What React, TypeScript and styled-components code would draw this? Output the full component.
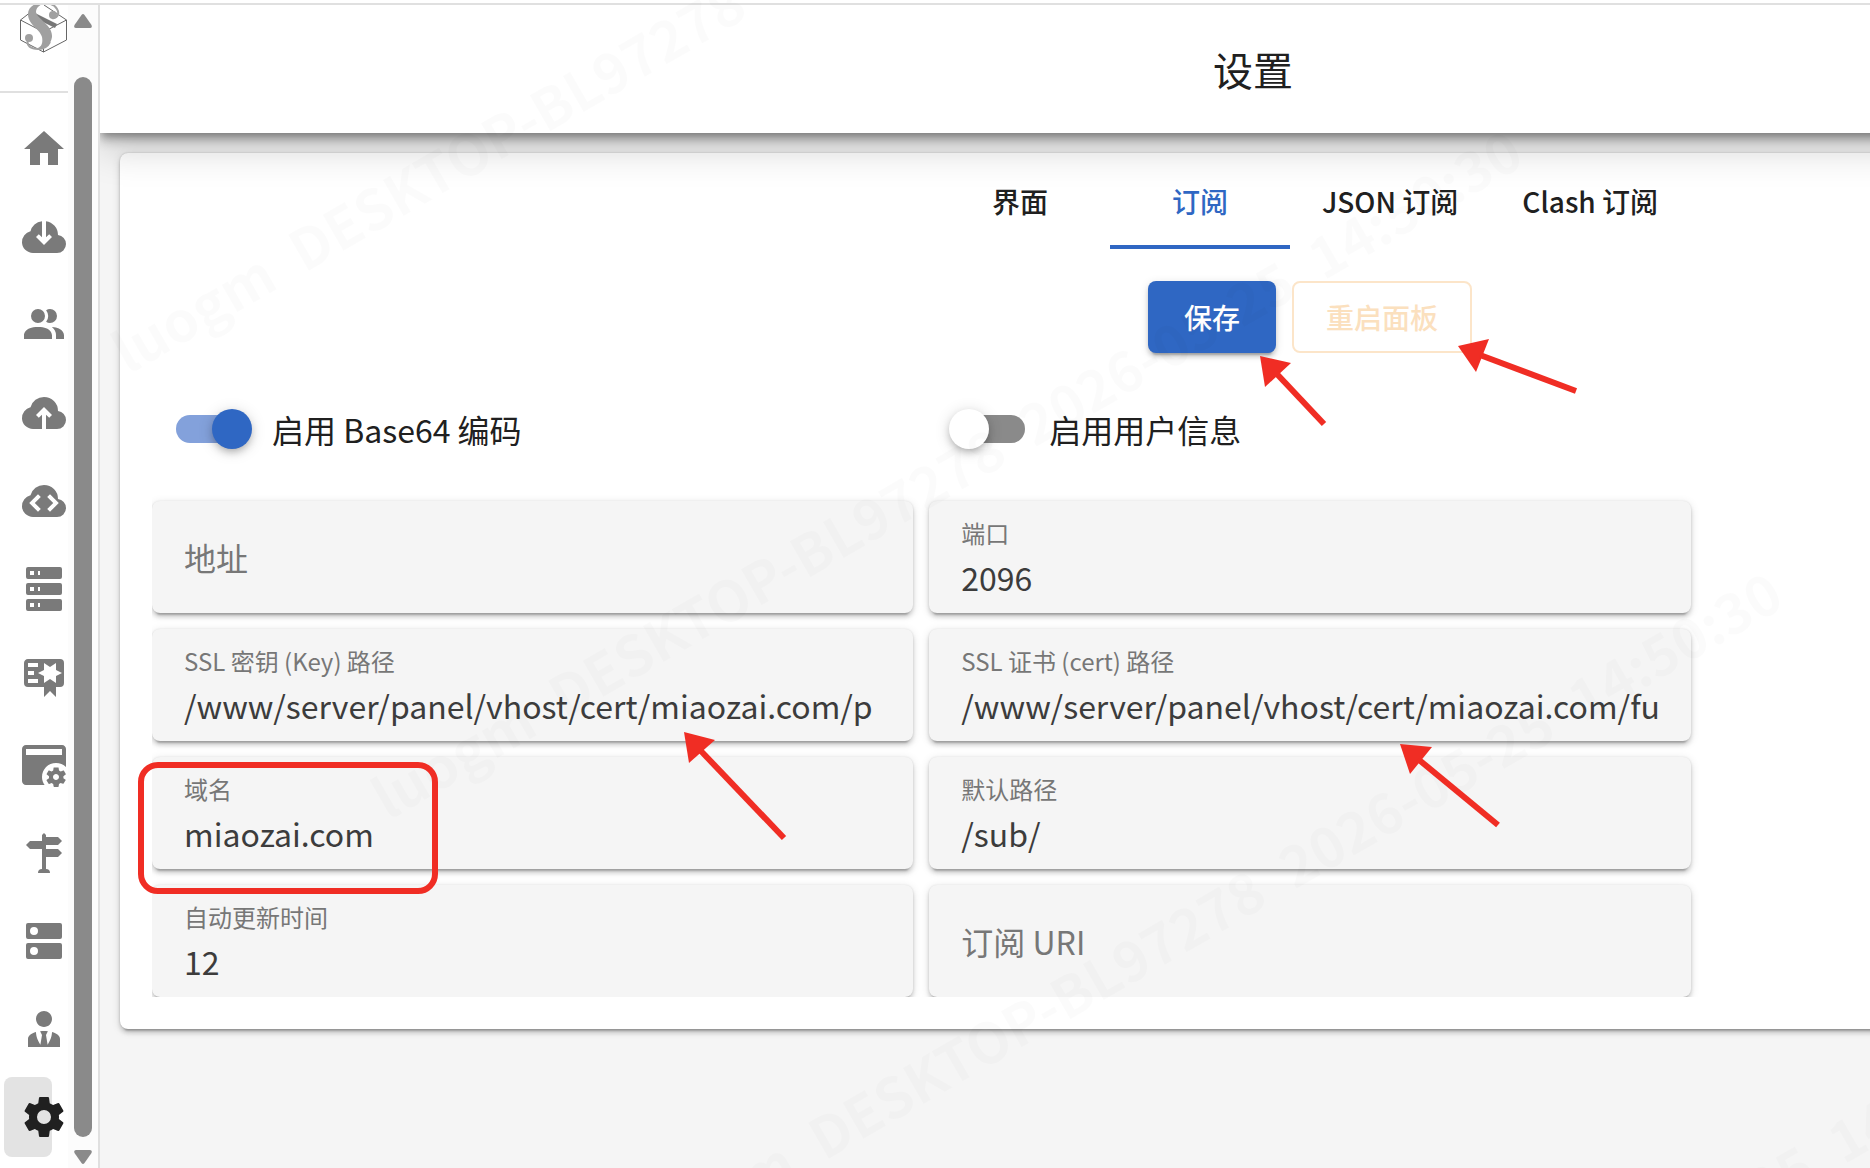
import React, { useId, useState } from "react";
import styled, { createGlobalStyle } from "styled-components";

const palette = {
  primary: "#2f67c3",
  text: "#202020",
  muted: "#777777",
  line: "#e0e0e0",
  surface: "#ffffff",
  page: "#f5f5f5",
  mark: "#f02d24",
};

const GlobalStyle = createGlobalStyle`
  * { box-sizing: border-box; }
  body {
    margin: 0;
    overflow: hidden;
    background: ${palette.page};
    color: ${palette.text};
    font-family: "Noto Sans CJK SC", "Noto Sans", sans-serif;
  }
  button, input { font-family: inherit; }
`;

const Page = styled.div`
  position: relative;
  display: flex;
  flex-direction: column;
  height: 100vh;
  overflow: hidden;
`;

const TopStrip = styled.div`
  flex: none;
  height: 5px;
  background: ${palette.surface};
  border-bottom: 2px solid ${palette.line};
`;

const Shell = styled.div`
  flex: 1;
  min-height: 0;
  display: flex;
`;

/* ---------- sidebar ---------- */

const Sidebar = styled.aside`
  position: relative;
  z-index: 2;
  flex: none;
  display: flex;
  width: 100px;
  background: ${palette.surface};
  border-right: 2px solid ${palette.line};
`;

const NavColumn = styled.div`
  width: 68px;
`;

const LogoBox = styled.div`
  display: flex;
  justify-content: flex-end;
  height: 88px;
  border-bottom: 2px solid ${palette.line};
`;

const NavList = styled.nav`
  display: flex;
  flex-direction: column;
  gap: 8px;
  padding: 16px 0 0 4px;
`;

const NavLink = styled.a<{ $active: boolean }>`
  display: flex;
  align-items: center;
  width: 48px;
  height: 80px;
  padding-left: 16px;
  border-radius: 8px;
  color: ${(p) => (p.$active ? palette.text : "#7a7a7a")};
  background: ${(p) => (p.$active ? "#e3e3e3" : "transparent")};

  svg {
    flex: none;
    width: 48px;
    height: 48px;
    fill: currentColor;
  }
`;

const ScrollTrack = styled.div`
  flex: 1;
  display: flex;
  flex-direction: column;
  align-items: center;
  padding: 9px 0 4px;
  background: #fcfcfc;

  svg {
    flex: none;
    width: 18px;
    height: 14px;
    fill: #8a8a8a;
  }
`;

const ScrollThumb = styled.div`
  flex: 1;
  width: 18px;
  margin: 49px 0 13px;
  border-radius: 9px;
  background: #8a8a8a;
`;

/* ---------- main area ---------- */

const Viewport = styled.div`
  flex: 1;
  min-width: 0;
  overflow: hidden;
`;

const Workspace = styled.div`
  display: flex;
  flex-direction: column;
  width: calc(100% + 650px);
`;

const AppBar = styled.header`
  position: relative;
  z-index: 1;
  display: flex;
  align-items: center;
  justify-content: center;
  height: 128px;
  padding-right: 114px;
  background: ${palette.surface};
  box-shadow:
    0 4px 8px -2px rgba(0, 0, 0, 0.3),
    0 8px 10px 0 rgba(0, 0, 0, 0.2),
    0 16px 36px 0 rgba(0, 0, 0, 0.18);
`;

const Title = styled.h1`
  margin: 0;
  font-size: 40px;
  font-weight: 400;
  line-height: 64px;
`;

const Content = styled.main`
  padding: 20px;
`;

const Card = styled.section`
  padding-bottom: 32px;
  border-radius: 8px;
  background: ${palette.surface};
  box-shadow:
    0 6px 2px -4px rgba(0, 0, 0, 0.2),
    0 4px 4px 0 rgba(0, 0, 0, 0.14),
    0 2px 10px 0 rgba(0, 0, 0, 0.12),
    0 0 2px 0 rgba(0, 0, 0, 0.2);
`;

const Tabs = styled.div`
  display: flex;
  justify-content: center;
  height: 96px;
`;

const Tab = styled.button<{ $active: boolean }>`
  min-width: 180px;
  padding: 4px 32px 0;
  border: 0;
  border-bottom: 4px solid ${(p) => (p.$active ? palette.primary : "transparent")};
  background: none;
  color: ${(p) => (p.$active ? palette.primary : palette.text)};
  font-size: 28px;
  font-weight: 500;
  line-height: 40px;
`;

const Actions = styled.div`
  display: flex;
  justify-content: center;
  gap: 16px;
  padding: 32px 0 20px;
`;

const ActionButton = styled.button<{ $outlined?: boolean }>`
  height: 72px;
  padding: 0 ${(p) => (p.$outlined ? 32 : 36)}px;
  border: ${(p) => (p.$outlined ? "2px solid #fce5c9" : "0")};
  border-radius: 8px;
  background: ${(p) => (p.$outlined ? "transparent" : palette.primary)};
  color: ${(p) => (p.$outlined ? "#fbe0be" : palette.surface)};
  font-size: 28px;
  font-weight: 500;
  line-height: 40px;
  box-shadow: ${(p) =>
    p.$outlined
      ? "none"
      : "0 6px 2px -4px rgba(0,0,0,.2), 0 4px 4px 0 rgba(0,0,0,.14), 0 2px 10px 0 rgba(0,0,0,.12)"};
`;

const FormGrid = styled.div`
  display: grid;
  grid-template-columns: repeat(3, minmax(0, 1fr));
  gap: 16px;
  margin: 0 32px;
  overflow: hidden;
`;

const SwitchRow = styled.div<{ $last?: boolean }>`
  display: flex;
  align-items: center;
  gap: 24px;
  grid-column: ${(p) => (p.$last ? "2 / 4" : "auto")};
  height: 112px;
  padding-left: 24px;

  label {
    font-size: 32px;
    line-height: 48px;
  }
`;

const SwitchInput = styled.input`
  appearance: none;
  flex: none;
  position: relative;
  width: 72px;
  height: 28px;
  margin: 0;
  border-radius: 14px;
  background: #8a8a8a;

  &::before {
    content: "";
    position: absolute;
    top: -6px;
    left: -4px;
    width: 40px;
    height: 40px;
    border-radius: 50%;
    background: ${palette.surface};
    box-shadow: 0 4px 8px -2px rgba(0, 0, 0, 0.3), 0 2px 16px 0 rgba(0, 0, 0, 0.14);
  }

  &:checked {
    background: #83a1db;
  }

  &:checked::before {
    left: 36px;
    background: ${palette.primary};
  }
`;

const FieldBox = styled.div<{ $start?: boolean; $empty: boolean }>`
  display: grid;
  grid-template-rows: ${(p) => (p.$empty ? "1fr" : "32px 52px")};
  grid-template-columns: minmax(0, 1fr);
  align-items: ${(p) => (p.$empty ? "center" : "end")};
  grid-column: ${(p) => (p.$start ? "1" : "2")};
  height: 112px;
  padding: ${(p) => (p.$empty ? "0 32px" : "16px 32px 0")};
  border-radius: 8px;
  background: ${palette.page};
  box-shadow:
    0 6px 2px -4px rgba(0, 0, 0, 0.2),
    0 4px 4px 0 rgba(0, 0, 0, 0.14),
    0 2px 10px 0 rgba(0, 0, 0, 0.12),
    0 0 2px 0 rgba(0, 0, 0, 0.1);

  label {
    grid-area: 1 / 1;
    color: ${palette.muted};
    font-size: ${(p) => (p.$empty ? 32 : 24)}px;
    line-height: ${(p) => (p.$empty ? 48 : 32)}px;
  }

  input {
    grid-area: ${(p) => (p.$empty ? "1 / 1" : "2 / 1")};
    width: 100%;
    height: 48px;
    padding: 0;
    border: 0;
    outline: 0;
    background: none;
    color: #3c3c3c;
    font-size: 32px;
    line-height: 48px;
  }
`;

/* ---------- overlays ---------- */

const Overlay = styled.div`
  position: absolute;
  inset: 0;
  z-index: 3;
  overflow: hidden;
  pointer-events: none;
`;

const Stamp = styled.span<{ $x: number; $y: number }>`
  position: absolute;
  left: ${(p) => p.$x}px;
  top: ${(p) => p.$y}px;
  display: flex;
  gap: 28px;
  color: rgba(0, 0, 0, 0.016);
  font-size: 56px;
  font-weight: 700;
  line-height: 64px;
  white-space: nowrap;
  transform: rotate(-30deg);
  transform-origin: left bottom;
`;

const MarkBox = styled.div`
  position: absolute;
  left: 138px;
  top: 762px;
  width: 300px;
  height: 132px;
  border: 6px solid ${palette.mark};
  border-radius: 20px;
`;

const Arrows = styled.svg`
  position: absolute;
  left: 0;
  top: 0;
  width: 1870px;
  height: 1168px;
  fill: ${palette.mark};
  stroke: ${palette.mark};
`;

/* ---------- data ---------- */

const navItems = [
  { name: "home", d: "M10,20V14H14V20H19V12H22L12,3L2,12H5V20H10Z" },
  {
    name: "inbounds",
    d: "M6.5 20Q4.22 20 2.61 18.43 1 16.85 1 14.58 1 12.63 2.17 11.1 3.35 9.57 5.25 9.15 5.68 7.13 7.25 5.73 8.83 4.33 11 4.07V12.15L9.4 10.6L8 12L12 16L16 12L14.6 10.6L13 12.15V4.07Q15.58 4.43 17.29 6.39 19 8.35 19 11 20.73 11.2 21.86 12.5 23 13.78 23 15.5 23 17.38 21.69 18.69 20.38 20 18.5 20Z",
  },
  {
    name: "clients",
    d: "M16 17V19H2V17S2 13 9 13 16 17 16 17M12.5 7.5A3.5 3.5 0 1 0 9 11A3.5 3.5 0 0 0 12.5 7.5M15.94 13A5.32 5.32 0 0 1 18 17V19H22V17S22 13.37 15.94 13M15 4A3.39 3.39 0 0 0 13.07 4.59A5 5 0 0 1 13.07 10.41A3.39 3.39 0 0 0 15 11A3.5 3.5 0 0 0 15 4Z",
  },
  {
    name: "outbounds",
    d: "M11 20H6.5Q4.22 20 2.61 18.43 1 16.85 1 14.58 1 12.63 2.17 11.1 3.35 9.57 5.25 9.15 5.88 6.85 7.75 5.43 9.63 4 12 4 14.93 4 16.96 6.04 19 8.07 19 11 20.73 11.2 21.86 12.5 23 13.78 23 15.5 23 17.38 21.69 18.69 20.38 20 18.5 20H13V12.85L14.6 14.4L16 13L12 9L8 13L9.4 14.4L11 12.85Z",
  },
  {
    name: "endpoints",
    d: "M6.5 20Q4.22 20 2.61 18.43 1 16.85 1 14.58 1 12.63 2.17 11.1 3.35 9.57 5.25 9.15 5.88 6.85 7.75 5.43 9.63 4 12 4 14.93 4 16.96 6.04 19 8.07 19 11 20.73 11.2 21.86 12.5 23 13.78 23 15.5 23 17.38 21.69 18.69 20.38 20 18.5 20ZM9 17.4L10.4 16L7.4 13L10.4 10L9 8.6L4.6 13ZM15 17.4L19.4 13L15 8.6L13.6 10L16.6 13L13.6 16Z",
  },
  {
    name: "services",
    d: "M4,1H20A1,1 0 0,1 21,2V6A1,1 0 0,1 20,7H4A1,1 0 0,1 3,6V2A1,1 0 0,1 4,1M4,9H20A1,1 0 0,1 21,10V14A1,1 0 0,1 20,15H4A1,1 0 0,1 3,14V10A1,1 0 0,1 4,9M4,17H20A1,1 0 0,1 21,18V22A1,1 0 0,1 20,23H4A1,1 0 0,1 3,22V18A1,1 0 0,1 4,17M9,5H10V3H9V5M9,13H10V11H9V13M9,21H10V19H9V21M5,3V5H7V3H5M5,11V13H7V11H5M5,19V21H7V19H5Z",
  },
  {
    name: "tls",
    d: "M4,3C2.89,3 2,3.89 2,5V15A2,2 0 0,0 4,17H12V22L15,19L18,22V17H20A2,2 0 0,0 22,15V5A2,2 0 0,0 20,3H4M12,5L15,7L18,5V8.5L21,10L18,11.5V15L15,13L12,15V11.5L9,10L12,8.5V5M4,5H9V7H4V5M4,9H7V11H4V9M4,13H9V15H4V13Z",
  },
  {
    name: "basics",
    d: "M21.7 18.6V17.6L22.8 16.8C22.9 16.7 23 16.6 22.9 16.5L21.9 14.8C21.9 14.7 21.7 14.7 21.6 14.7L20.4 15.2C20.1 15 19.8 14.8 19.5 14.7L19.3 13.4C19.3 13.3 19.2 13.2 19.1 13.2H17.1C16.9 13.2 16.8 13.3 16.8 13.4L16.6 14.7C16.3 14.9 16.1 15 15.8 15.2L14.6 14.7C14.5 14.7 14.4 14.7 14.3 14.8L13.3 16.5C13.3 16.6 13.3 16.7 13.4 16.8L14.5 17.6V18.6L13.4 19.4C13.3 19.5 13.2 19.6 13.3 19.7L14.3 21.4C14.4 21.5 14.5 21.5 14.6 21.5L15.8 21C16 21.2 16.3 21.4 16.6 21.5L16.8 22.8C16.9 22.9 17 23 17.1 23H19.1C19.2 23 19.3 22.9 19.3 22.8L19.5 21.5C19.8 21.3 20 21.2 20.3 21L21.5 21.4C21.6 21.4 21.7 21.4 21.8 21.3L22.8 19.6C22.9 19.5 22.9 19.4 22.8 19.4L21.7 18.6M18 19.5C17.2 19.5 16.5 18.8 16.5 18S17.2 16.5 18 16.5 19.5 17.2 19.5 18 18.8 19.5 18 19.5M11 18C11 14.1 14.1 11 18 11C19.9 11 21.7 11.8 23 13V4C23 2.9 22.1 2 21 2H3C1.9 2 1 2.9 1 4V20C1 21.1 1.9 22 3 22H12.3C11.5 20.8 11 19.5 11 18M3 7V4H21V7H3Z",
  },
  {
    name: "rules",
    d: "M11,10H5L3,8L5,6H11V3L12,2L13,3V4H19L21,6L19,8H13V10H19L21,12L19,14H13V20A2,2 0 0,1 15,22H9A2,2 0 0,1 11,20V10Z",
  },
  {
    name: "dns",
    d: "M7,9A2,2 0 0,1 5,7A2,2 0 0,1 7,5A2,2 0 0,1 9,7A2,2 0 0,1 7,9M20,3H4A1,1 0 0,0 3,4V10A1,1 0 0,0 4,11H20A1,1 0 0,0 21,10V4A1,1 0 0,0 20,3M7,19A2,2 0 0,1 5,17A2,2 0 0,1 7,15A2,2 0 0,1 9,17A2,2 0 0,1 7,19M20,13H4A1,1 0 0,0 3,14V20A1,1 0 0,0 4,21H20A1,1 0 0,0 21,20V14A1,1 0 0,0 20,13Z",
  },
  {
    name: "admins",
    d: "M12 3C14.21 3 16 4.79 16 7S14.21 11 12 11 8 9.21 8 7 9.79 3 12 3M16 13.54C16 14.6 15.72 17.07 13.81 19.83L13 15L13.94 13.12C13.32 13.05 12.67 13 12 13S10.68 13.05 10.06 13.12L11 15L10.19 19.83C8.28 17.07 8 14.6 8 13.54C5.61 14.24 4 15.5 4 17V21H20V17C20 15.5 18.4 14.24 16 13.54Z",
  },
  {
    name: "settings",
    d: "M12,15.5A3.5,3.5 0 0,1 8.5,12A3.5,3.5 0 0,1 12,8.5A3.5,3.5 0 0,1 15.5,12A3.5,3.5 0 0,1 12,15.5M19.43,12.97C19.47,12.65 19.5,12.33 19.5,12C19.5,11.67 19.47,11.34 19.43,11L21.54,9.37C21.73,9.22 21.78,8.95 21.66,8.73L19.66,5.27C19.54,5.05 19.27,4.96 19.05,5.05L16.56,6.05C16.04,5.66 15.5,5.32 14.87,5.07L14.5,2.42C14.46,2.18 14.25,2 14,2H10C9.75,2 9.54,2.18 9.5,2.42L9.13,5.07C8.5,5.32 7.96,5.66 7.44,6.05L4.95,5.05C4.73,4.96 4.46,5.05 4.34,5.27L2.34,8.73C2.21,8.95 2.27,9.22 2.46,9.37L4.57,11C4.53,11.34 4.5,11.67 4.5,12C4.5,12.33 4.53,12.65 4.57,12.97L2.46,14.63C2.27,14.78 2.21,15.05 2.34,15.27L4.34,18.73C4.46,18.95 4.73,19.03 4.95,18.95L7.44,17.94C7.96,18.34 8.5,18.68 9.13,18.93L9.5,21.58C9.54,21.82 9.75,22 10,22H14C14.25,22 14.46,21.82 14.5,21.58L14.87,18.93C15.5,18.67 16.04,18.34 16.56,17.94L19.05,18.95C19.27,19.03 19.54,18.95 19.66,18.73L21.66,15.27C21.78,15.05 21.73,14.78 21.54,14.63L19.43,12.97Z",
  },
];

const tabs = ["界面", "订阅", "JSON 订阅", "Clash 订阅"];

const fields = [
  { label: "地址", value: "" },
  { label: "端口", value: "2096" },
  { label: "SSL 密钥 (Key) 路径", value: "/www/server/panel/vhost/cert/miaozai.com/p" },
  { label: "SSL 证书 (cert) 路径", value: "/www/server/panel/vhost/cert/miaozai.com/fu" },
  { label: "域名", value: "miaozai.com" },
  { label: "默认路径", value: "/sub/" },
  { label: "自动更新时间", value: "12" },
  { label: "订阅 URI", value: "" },
];

const stamps = [
  { x: 132, y: 318 },
  { x: 392, y: 764 },
  { x: 652, y: 1206 },
  { x: 912, y: 1648 },
  { x: -1145, y: 1648 },
];

/* ---------- parts ---------- */

function Logo() {
  return (
    <svg width="50" height="50" viewBox="18 5 50 50" aria-label="S-UI" role="img">
      <path
        d="M36 8L20.500 20V40L43.500 52L66.500 40V20L44 5M20.500 20L43.500 32L66.500 20M43.500 32V52"
        fill="none"
        stroke="#666666"
        strokeWidth="1"
      />
      <path d="M33 12L57 24L55 28L35 18Z" fill="#777777" />
      <path
        d="M52 18C57 19 60 14 57 9C54 4 49 3 44 4M28 40C26 46 31 49 38 49C44 49 48 46 50 42"
        fill="none"
        stroke="#a0a0a0"
        strokeWidth="2"
      />
      <path
        d="M28 14C28 7 35 2 45 3C39 5 36 8 36 12C37 19 53 25 52 37C51 45 44 50 36 49C42 47 43 43 42 37C40 29 28 25 28 14Z"
        fill="#a0a0a0"
      />
      <circle cx="29" cy="38" r="4" fill="#a0a0a0" />
      <circle cx="53" cy="15" r="4" fill="#a0a0a0" />
    </svg>
  );
}

function Field({ label, value, start }: { label: string; value: string; start: boolean }) {
  const id = useId();
  const [current, setCurrent] = useState(value);
  return (
    <FieldBox $start={start} $empty={current === ""}>
      <label htmlFor={id}>{label}</label>
      <input id={id} type="text" value={current} onChange={(e) => setCurrent(e.target.value)} />
    </FieldBox>
  );
}

function Switch({ label, on, last }: { label: string; on: boolean; last?: boolean }) {
  const id = useId();
  return (
    <SwitchRow $last={last}>
      <SwitchInput id={id} type="checkbox" role="switch" defaultChecked={on} />
      <label htmlFor={id}>{label}</label>
    </SwitchRow>
  );
}

function Arrow({ head, from, to }: { head: string; from: [number, number]; to: [number, number] }) {
  return (
    <g>
      <polygon points={head} stroke="none" />
      <line x1={from[0]} y1={from[1]} x2={to[0]} y2={to[1]} strokeWidth="6" />
    </g>
  );
}

export default function App() {
  const [tab, setTab] = useState(1);

  return (
    <Page>
      <GlobalStyle />
      <TopStrip />
      <Shell>
        <Sidebar>
          <NavColumn>
            <LogoBox>
              <Logo />
            </LogoBox>
            <NavList>
              {navItems.map((item) => (
                <NavLink
                  key={item.name}
                  href={`#${item.name}`}
                  aria-label={item.name}
                  $active={item.name === "settings"}
                >
                  <svg viewBox="0 0 24 24" fillRule="evenodd">
                    <path d={item.d} />
                  </svg>
                </NavLink>
              ))}
            </NavList>
          </NavColumn>
          <ScrollTrack>
            <svg viewBox="0 0 18 14">
              <path d="M7.5 1Q9 -1 10.500 1L17.500 11Q18.500 14 16 14H2Q-.5 14 .5 11Z" />
            </svg>
            <ScrollThumb />
            <svg viewBox="0 0 18 14">
              <path d="M7.5 13Q9 15 10.500 13L17.500 3Q18.500 0 16 0H2Q-.5 0 .5 3Z" />
            </svg>
          </ScrollTrack>
        </Sidebar>

        <Viewport>
          <Workspace>
            <AppBar>
              <Title>设置</Title>
            </AppBar>
            <Content>
              <Card>
                <Tabs role="tablist">
                  {tabs.map((name, i) => (
                    <Tab
                      key={name}
                      type="button"
                      role="tab"
                      aria-selected={i === tab}
                      $active={i === tab}
                      onClick={() => setTab(i)}
                    >
                      {name}
                    </Tab>
                  ))}
                </Tabs>
                <Actions>
                  <ActionButton type="button">保存</ActionButton>
                  <ActionButton type="button" $outlined>
                    重启面板
                  </ActionButton>
                </Actions>
                <FormGrid>
                  <Switch label="启用 Base64 编码" on />
                  <Switch label="启用用户信息" on={false} last />
                  {fields.map((f, i) => (
                    <Field key={f.label} label={f.label} value={f.value} start={i % 2 === 0} />
                  ))}
                </FormGrid>
              </Card>
            </Content>
          </Workspace>
        </Viewport>
      </Shell>

      <Overlay aria-hidden="true">
        {stamps.map((s) => (
          <Stamp key={`${s.x}:${s.y}`} $x={s.x} $y={s.y}>
            <span>luogm</span>
            <span>DESKTOP-BL97278</span>
            <span>2026-05-25</span>
            <span>14:50:30</span>
          </Stamp>
        ))}
        <MarkBox />
        <Arrows viewBox="0 0 1870 1168">
          <Arrow head="1260,356 1291,363 1265,387" from={[1276, 373]} to={[1324, 424]} />
          <Arrow head="1458,346 1489,339 1476,372" from={[1480, 355]} to={[1576, 391]} />
          <Arrow head="684,732 715,740 689,763" from={[700, 750]} to={[784, 838]} />
          <Arrow head="1400,744 1432,747 1410,774" from={[1418, 759]} to={[1498, 825]} />
        </Arrows>
      </Overlay>
    </Page>
  );
}
